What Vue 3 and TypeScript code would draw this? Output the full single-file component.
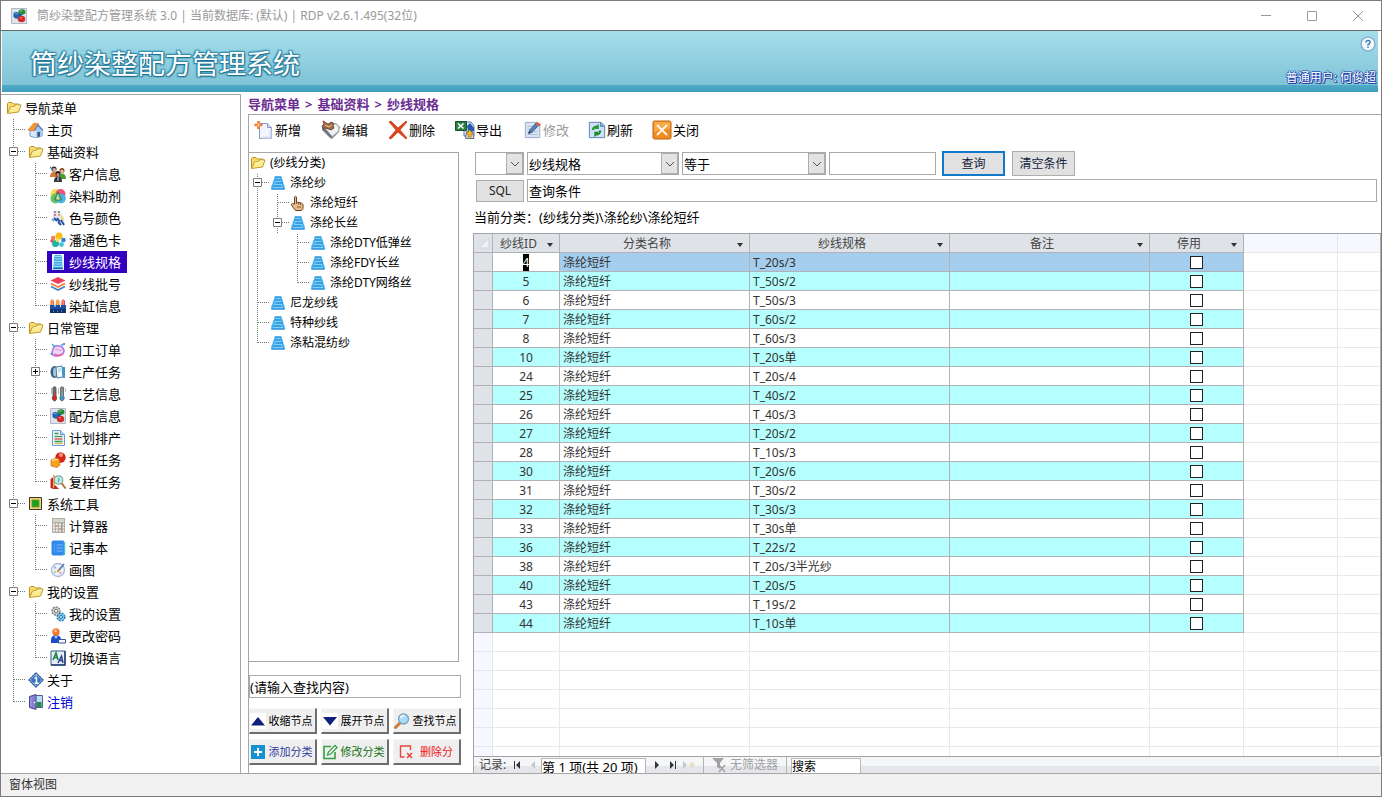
<script setup lang="ts">
import { ref } from 'vue'

type Guide = 'blank' | 'line' | 'tee' | 'end' | 'minus' | 'plus'

interface TreeRow {
  label: string
  icon: string
  guides: Guide[]
  active?: boolean
  link?: boolean
}

const icons: Record<string, string> = {
  folder:
    '<path d="M1.5 13.5V3.5l1-1h3.5l1.5 1.500h5.5v2" fill="#f7dc6a" stroke="#b8902a"/><path d="M1.5 13.5L4.5 7l4-.5 1-1.500h5.5l-2.500 7z" fill="#fdec8d" stroke="#c39a2e" stroke-linejoin="round"/><path d="M5 8l4-.5 1-1.500h3.500" stroke="#fffbd0" fill="none"/>',
  home:
    '<path d="M2 8v6l6 2 6-2V8L9 3z" fill="#dce9f8" stroke="#7e9ccb"/><path d="M8 8l3-4 4 4v6l-7 2z" fill="#a9c6ec"/><path d="M0 8L6 1l5 1-5 7z" fill="#f79531" stroke="#d9691a" stroke-width=".6"/><path d="M10 2l5.500 6-1 .8L10 4 7 9 6 8z" fill="#4f7fc4"/><path d="M9.500 10h2.500v4.500l-2.500.8z" fill="#34538f"/>',
  people:
    '<circle cx="4" cy="3" r="2.600" fill="#3c2a22"/><circle cx="4.300" cy="3.800" r="1.700" fill="#e8b088"/><path d="M0 11c0-4 2-5 4-5s4 1 4 5z" fill="#d8763c"/><path d="M0 1l3 3" stroke="#3a8ad0" stroke-width="1.500"/><circle cx="12" cy="4.500" r="2.500" fill="#8a4a28"/><circle cx="12" cy="5.300" r="1.600" fill="#f0c09a"/><path d="M8.500 13c0-4 1.500-5.500 3.500-5.500s4 1.500 4 5.500z" fill="#4c9b32"/><circle cx="8" cy="7.500" r="2.500" fill="#221d1c"/><circle cx="8" cy="8.500" r="1.600" fill="#c98f70"/><path d="M4 16c0-4 1.500-5.500 4-5.500s4 1.500 4 5.500z" fill="#30343c"/><path d="M8 11v4" stroke="#ddd"/>',
  dye:
    '<circle cx="5.500" cy="6" r="5" fill="#f4de4e"/><circle cx="10.500" cy="6" r="5" fill="#ec5577"/><circle cx="5.500" cy="10.500" r="5" fill="#63c46a"/><circle cx="11" cy="10.500" r="4.800" fill="#45b4e8"/><path d="M8 4l-3.500 8h7z" fill="#8fc873" stroke="#416f43"/><path d="M8 7l-1 4h2.500" fill="none" stroke="#e8f4da" stroke-width=".8"/>',
  palette:
    '<path d="M3 1h7l4 7 1 7-5-1-7-6z" fill="#e3e6ef"/><g stroke-width="2"><path d="M4 2h2" stroke="#a287c0"/><path d="M8 2h2" stroke="#6b9f64"/><path d="M4 5h2" stroke="#d87894"/><path d="M8 5h2" stroke="#e7a15c"/><path d="M11 6l2 4" stroke="#eedb62"/></g><path d="M4 8l3 3M7 8l3 4M11 10l3 5M8 12l3 3" stroke="#234b9e" stroke-width="1.800"/><path d="M2 9l2 2" stroke="#62a8dc" stroke-width="2"/>',
  pantone:
    '<circle cx="9" cy="4" r="3.600" fill="#f8bd16"/><circle cx="3.200" cy="6" r="2.200" fill="#f27f4c"/><circle cx="2" cy="9" r="1.800" fill="#ee4f69"/><circle cx="13.500" cy="8" r="2.300" fill="#367ed1"/><circle cx="5.500" cy="11.500" r="3.500" fill="#20b59c"/><circle cx="11.500" cy="12.500" r="2.400" fill="#48c3dc"/><circle cx="7.500" cy="8" r="2" fill="#f8df58"/>',
  spool:
    '<path d="M2 0h12v16H2z" fill="#e8f5fb"/><path d="M5 1h6l1 3 .5 10.500h-9L4 4z" fill="#3fa7e4"/><path d="M5 2.500h6M4.500 5h7M4 7.500h8M4 10h8M4 12.500h8" stroke="#9fdcf8"/><path d="M3 14.500h10" stroke="#176fae" stroke-width="1.500"/>',
  cone:
    '<path d="M4.500 1.500h7L12.500 5l.5 1 .5 3 1 1.500.500 4H1L1.500 10.500 2.500 9 3 6 4 5z" fill="#42b0f0"/><path d="M5.500 3.500h5M4.500 6.500h7M4 9.500h8M3 12.500h10" stroke="#7dcffa" stroke-width="1.500"/><path d="M5 2h6M4 5h7M6 8h7M3 11h8M1.500 14h13" stroke="#2386cf"/>',
  layers:
    '<path d="M8 1l7.500 3.500L8 8 .5 4.500z" fill="#ec3f5d"/><path d="M1 7.500L8 11l7-3.500" fill="none" stroke="#f17a38" stroke-width="1.600"/><path d="M1 10.500L8 14l7-3.500" fill="none" stroke="#3d83cc" stroke-width="1.600"/>',
  vat:
    '<path d="M.5 8V3q1.500-3.500 3.500 0v5z" fill="#f26a3c"/><path d="M6 8V3q1.500-3.500 3.500 0v5z" fill="#f7923c"/><path d="M11.500 8V3q1.500-3.500 3.500 0v5z" fill="#e2405c"/><path d="M2.200 2v6M7.700 2v6M13.200 2v6" stroke="#fbb86a"/><path d="M0 7h16v8H0z" fill="#1b4fa3"/><path d="M0 11h16v4H0z" fill="#123070"/><path d="M3 13h1M7 13h1M11 13h1" stroke="#73d0f3"/><path d="M5 4v5M10.500 4v5" stroke="#e4ecf8"/>',
  order:
    '<path d="M3 7q1-4 6-3t5 5-7 5-4-7z" fill="#ead9fa" stroke="#a57be0" stroke-width="1.500"/><path d="M4 12q4 3 9 0" stroke="#eb64a8" stroke-width="2" fill="none"/><path d="M2 2l3 3M11 2l2 2" stroke="#3ea2e0" stroke-width="1.300"/><path d="M5 8q2-2 4 0t3-1" stroke="#f08bbe" fill="none"/><circle cx="1.500" cy="12" r="1" fill="#3b8ee2"/><circle cx="14" cy="2" r="1" fill="#385dd7"/>',
  task:
    '<ellipse cx="4.500" cy="8" rx="4" ry="6" fill="#3d5c7c"/><ellipse cx="5" cy="8" rx="2" ry="4.500" fill="#a3c7dd"/><path d="M6 3l6-1 1 11-6 1z" fill="#f4fafe" stroke="#4d7fa5"/><path d="M12 3h3v11h-2z" fill="#3f98ca"/><path d="M8 5h3M8 7h3" stroke="#9fc3d8"/>',
  thermo:
    '<path d="M3 1.500q1.500-1.500 3 0V10q1.500 2 0 4t-3 0 0-4z" fill="#7d7270" stroke="#4a4040" stroke-width=".8"/><path d="M4.500 6v6" stroke="#c9423a"/><circle cx="4.500" cy="12" r="2" fill="#da2318"/><path d="M1 3h1M1 5h1M1 7h1" stroke="#777"/><path d="M10.500 1.500q1.500-1.500 3 0V10q1.500 2 0 4t-3 0 0-4z" fill="#8b8f92" stroke="#555" stroke-width=".8"/><path d="M12 6v6" stroke="#5bb0d6"/><circle cx="12" cy="12" r="1.800" fill="#269bd0"/><path d="M8 3h1M8 5h1M8 7h1M15 3h1M15 5h1" stroke="#777"/>',
  formula:
    '<path d="M.5.5h15v15H.5z" fill="#dfe3ea" stroke="#b4bac4"/><path d="M2.500 5q3-2 6 0l1 3-2 2.500q-3 1-5-1.500z" fill="#1f64b4"/><ellipse cx="11" cy="4" rx="3.500" ry="2.800" fill="#278b3b"/><ellipse cx="10.500" cy="11" rx="3.700" ry="3.200" fill="#d02c2c"/><ellipse cx="10" cy="3" rx="1.300" ry=".8" fill="#6fc274"/><path d="M4 5.500l3 .5" stroke="#6ba9e2"/><ellipse cx="10" cy="9.800" rx="1.300" ry=".8" fill="#f07c74"/><path d="M8 7.500l3-1" stroke="#184a88" stroke-width="1.500"/>',
  plan:
    '<path d="M2.500.5h8l4 4v11h-12z" fill="#eaf3fd" stroke="#6e9bd3"/><path d="M10.500.5v4h4" fill="#b9d4f1" stroke="#6e9bd3"/><path d="M4.500 6.500h8" stroke="#3f9b46" stroke-width="1.300"/><path d="M4.500 9h8" stroke="#d54a33" stroke-width="1.300"/><path d="M4.500 11.500h8M4.500 3.500h4" stroke="#3f9b46" stroke-width="1.300"/><path d="M4.500 13.500h8" stroke="#e5b432"/>',
  sample:
    '<circle cx="10.500" cy="5.500" r="5.200" fill="#dc2416"/><circle cx="11" cy="3" r="2" fill="#f99b85"/><path d="M1 8q4-3 8-1l1 6-3 2.500-6-1.500z" fill="#f6a21d" stroke="#cc6f0c" stroke-width=".7"/><path d="M2 8.500q4-2 6-.5" stroke="#ffe08c" fill="none" stroke-width="1.300"/>',
  review:
    '<path d="M.5 5l3-2v12l-3-1z" fill="#c92a28"/><path d="M3 1h2v14H3z" fill="#f2ac48"/><path d="M5 11l4 4H3z" fill="#b0302c"/><circle cx="8.500" cy="6" r="4.200" fill="#c9ecf2" stroke="#7fa9ad" stroke-width="1.300"/><path d="M8 4q2 1 0 4" stroke="#66b777" fill="none" stroke-width="1.500"/><path d="M11.500 9l4 5.500" stroke="#b6733a" stroke-width="2"/>',
  chip:
    '<path d="M1.500 1.500h12v12h-12z" fill="#f1d27a" stroke="#3b3724"/><path d="M4 4h7v7H4z" fill="#17a51e" stroke="#7a8a2a" stroke-width=".8"/>',
  calc:
    '<path d="M2 0h13v15H2z" fill="#b5aea5"/><path d="M3 1h11v3H3z" fill="#d2d5cb"/><path d="M3 6.500h11M3 9.500h11M3 12.500h11" stroke="#eee" stroke-width="1.800" stroke-dasharray="2 1"/><path d="M6 8h2M9 11h2" stroke="#c87e66"/><path d="M12 5v9" stroke="#8b8783"/>',
  notebook:
    '<rect x="1.500" y=".5" width="13" height="15" rx="2" fill="#3189ec"/><path d="M14.500 2v13" stroke="#43c6c5" stroke-width="1.500"/><path d="M4 5h1M4 8h1M4 11h1M6.500 5h6M6.500 8h6M6.500 11h6" stroke="#80bafa" stroke-width="1.200"/>',
  paint:
    '<circle cx="8" cy="8" r="6.500" fill="#edf3fb" stroke="#a4b9dc" stroke-width="1.300"/><circle cx="5" cy="5.500" r="1.200" fill="#92b8e8"/><circle cx="5" cy="10" r="1.200" fill="#a6d89f"/><circle cx="10.500" cy="11" r="1.200" fill="#e7a3bc"/><path d="M14 2L9 8" stroke="#5b74a8" stroke-width="1.800"/><path d="M9 7.500L7.500 10" stroke="#e88928" stroke-width="2"/>',
  gears:
    '<circle cx="6" cy="5" r="4" fill="#cfd0d0" stroke="#848688" stroke-width="1.600" stroke-dasharray="2 1"/><circle cx="6" cy="5" r="1.600" fill="#fff" stroke="#777"/><circle cx="11" cy="11" r="3.800" fill="#89cff2" stroke="#2a83b7" stroke-width="1.600" stroke-dasharray="2 1"/><circle cx="11" cy="11" r="1.500" fill="#fff" stroke="#176ea5"/>',
  user:
    '<path d="M1 15V11q1-4 5-4t5 4v4z" fill="#1e4dcc"/><path d="M4 8l2 3 2-3" fill="#a4c4ff"/><circle cx="6" cy="4" r="3.700" fill="#f5772a"/><circle cx="5.500" cy="2.800" r="1.500" fill="#fdb987"/><path d="M8.500 11.500h7v3.500h-7z" fill="#f3f6ff" stroke="#3d588f"/>',
  language:
    '<path d="M1 1h14v14H1z" fill="#e5eef9" stroke="#385c8c"/><path d="M1 15h14V1" fill="none" stroke="#203f70" stroke-width="1.500"/><path d="M3 10l3-7 2 7M4 7.500h3.500" stroke="#228340" fill="none" stroke-width="1.600"/><path d="M8 13l3.500-7 1.500 7M9 10.500h4" stroke="#20408b" fill="none" stroke-width="1.400"/>',
  about:
    '<path d="M8 .5L15.500 8 8 15.500.5 8z" fill="#2a61ad" stroke="#173e76" stroke-dasharray="1.500 1"/><path d="M8 2L14 8l-6 6-6-6z" fill="#3a75c2" stroke="#c9dcf2" stroke-width=".6"/><path d="M6.500 6H8.500v5M6.500 11.200h4" stroke="#fff" stroke-width="1.500" fill="none"/><path d="M7.500 4h1.500" stroke="#fff"/>',
  logout:
    '<path d="M6 1.500h8.500v12H6z" fill="#b7dff4" stroke="#52618e"/><path d="M8.500 8h5v5h-5z" fill="#228c48"/><path d="M1.500 2.500L8 .5v15l-6.500-2z" fill="#8580cb" stroke="#4b4691"/><path d="M3 3.500v9" stroke="#aaa5e5"/><circle cx="6.500" cy="8.500" r=".8" fill="#fff"/>',
  hand:
    '<path d="M4.500 9V2q1-1.500 2 0v5l5 1 1.500 1.500v4L11.500 15.500h-6L2 11q-1.500-2 .5-2.500z" fill="#e8b98b" stroke="#6c4328"/><path d="M6.500 7v2M8.500 7.500v2M10.500 8v2" stroke="#8b5938"/><path d="M7 12h4" stroke="#c18a5d" stroke-width="2"/>',
  add:
    '<path d="M5.500 3.500h8l4 4v11h-12z" fill="#f3f5fd" stroke="#8f96c3"/><path d="M13.500 3.500v4h4" fill="#d4d8f0" stroke="#8f96c3"/><path d="M16.500 9v8.500h-8" fill="none" stroke="#d9ddf3" stroke-width="2"/><path d="M4.500 1v8M.5 5h8" stroke="#ee762b" stroke-width="2.600"/><path d="M4.500 3v4M2.500 5h4" stroke="#ffc48a"/>',
  edit:
    '<path d="M8 4l7-1 4 4-1 5-7 7-2-1L1 10V8z" fill="#8b8f94"/><path d="M5 9l6-5h4l3 3.500-1 4-6 5z" fill="#f1f2f3" stroke="#b3b6ba" stroke-width=".7"/><path d="M1 9l9 9 1-1.500L4 9z" fill="#6f7378"/><path d="M2 1l5 3 4-2 2 2-1 2 1 2-3 2-5-2-3 .5L1 6l2-2z" fill="#9c6a48" stroke="#5b3a28" stroke-width=".8"/><path d="M4 5l4 2 3-2" stroke="#dba67c" stroke-width="1.500" fill="none"/><path d="M2 1l3 3" stroke="#cf5536" stroke-width="1.500"/>',
  remove:
    '<path d="M1 2l2-1 7 7 8-7 1 1-7 8 7 8-1 1-8-7-7 7-2-1 7-8z" fill="#e4441b" stroke="#b62c0b" stroke-width=".6"/>',
  export:
    '<path d="M9 2h7l3 4v10H9z" fill="#e6eefc" stroke="#4777bd"/><path d="M.5 1.500h11v9H.5z" fill="#2a7f3d" stroke="#17532a"/><path d="M3 3.500l5.500 5M8.500 3.500L3 8.500" stroke="#fff" stroke-width="1.600"/><path d="M12 6l3-3 4 5v3h-6z" fill="#2758af"/><path d="M10.500 18.500l1-7h6l1.500 7z" fill="#d9dbe0" stroke="#67707e"/><path d="M14.700 10l3.500 4h-2v3h-3v-3h-2z" fill="#f7b62e" stroke="#ae7413" stroke-width=".7"/>',
  modify:
    '<path d="M1.500 1.500h13l3 3v14h-16z" fill="#d8e3f4" stroke="#93a6c5"/><path d="M4 6h8M4 9h6M4 12h11M4 15h11" stroke="#a8bad8"/><path d="M5 14l1.500-4 7-8 3 2.500-7.500 8z" fill="#4d83bc" stroke="#385e8c"/><path d="M13 3l2-2 4 3-2 2.500z" fill="#e85d42"/><path d="M5 14l1-2.500 1.500 1z" fill="#222"/>',
  refresh:
    '<path d="M1.500 1.500h13l4 4v13h-17z" fill="#cfe2fa" stroke="#527cae"/><path d="M14 1.500v4.500h4.500" fill="#86acd9" stroke="#527cae"/><path d="M4 10q1-5 6-5l2-2v6H7l1.500-1.500Q6.500 7.500 7 10z" fill="#259536"/><path d="M15 10.500q-1 5.500-6 5.500l-2 2v-6h5l-1.500 1.500q2 0 1.500-3z" fill="#1c8b2d"/>',
  close:
    '<rect x="1" y="1" width="18" height="18" rx="1.500" fill="#ef8d20" stroke="#bd6514"/><path d="M2 2h16v7q-8-1-16 3z" fill="#f7aa47"/><path d="M5.500 5.500l9 9M14.500 5.500l-9 9" stroke="#fff7e9" stroke-width="1.800" stroke-linecap="round"/>',
  up: '<path d="M0 0h16v16H0z" fill="#fff"/><path d="M8 4l7 8.500H1z" fill="#0f1f7a"/>',
  down: '<path d="M0 0h16v16H0z" fill="#fff"/><path d="M8 12.500L1 4h14z" fill="#0f1f7a"/>',
  find:
    '<path d="M6.500 9.500L1.500 14.500" stroke="#d47b33" stroke-width="3" stroke-linecap="round"/><circle cx="9.500" cy="6" r="5" fill="#a8dcf8" stroke="#7d9fb8" stroke-width="1.300"/><path d="M6.500 5q1-3 4-2.500" stroke="#fff" fill="none" stroke-width="1.500"/>',
  plusBox: '<path d="M1 1h14v14H1z" fill="#1691d0"/><path d="M8 4v8M4 8h8" stroke="#fff" stroke-width="2"/>',
  editBox:
    '<path d="M9 2.500H2v12h11V8" fill="none" stroke="#35a045" stroke-width="1.600"/><path d="M5.500 11l1-3L13 1.500l2 2L8.500 10z" fill="#fff" stroke="#35a045" stroke-width="1.300"/>',
  deleteBox:
    '<path d="M12.500 6V2h-10v11h4" fill="none" stroke="#e8483d" stroke-width="1.400"/><path d="M9 9l5 5M14 9l-5 5" stroke="#e8483d" stroke-width="1.600"/>',
}

const crumbs = ['导航菜单', '>', '基础资料', '>', '纱线规格']

const nav: TreeRow[] = [
  { label: '导航菜单', icon: 'folder', guides: [] },
  { label: '主页', icon: 'home', guides: ['tee'] },
  { label: '基础资料', icon: 'folder', guides: ['minus'] },
  { label: '客户信息', icon: 'people', guides: ['line', 'tee'] },
  { label: '染料助剂', icon: 'dye', guides: ['line', 'tee'] },
  { label: '色号颜色', icon: 'palette', guides: ['line', 'tee'] },
  { label: '潘通色卡', icon: 'pantone', guides: ['line', 'tee'] },
  { label: '纱线规格', icon: 'spool', guides: ['line', 'tee'], active: true },
  { label: '纱线批号', icon: 'layers', guides: ['line', 'tee'] },
  { label: '染缸信息', icon: 'vat', guides: ['line', 'end'] },
  { label: '日常管理', icon: 'folder', guides: ['minus'] },
  { label: '加工订单', icon: 'order', guides: ['line', 'tee'] },
  { label: '生产任务', icon: 'task', guides: ['line', 'plus'] },
  { label: '工艺信息', icon: 'thermo', guides: ['line', 'tee'] },
  { label: '配方信息', icon: 'formula', guides: ['line', 'tee'] },
  { label: '计划排产', icon: 'plan', guides: ['line', 'tee'] },
  { label: '打样任务', icon: 'sample', guides: ['line', 'tee'] },
  { label: '复样任务', icon: 'review', guides: ['line', 'end'] },
  { label: '系统工具', icon: 'chip', guides: ['minus'] },
  { label: '计算器', icon: 'calc', guides: ['line', 'tee'] },
  { label: '记事本', icon: 'notebook', guides: ['line', 'tee'] },
  { label: '画图', icon: 'paint', guides: ['line', 'end'] },
  { label: '我的设置', icon: 'folder', guides: ['minus'] },
  { label: '我的设置', icon: 'gears', guides: ['line', 'tee'] },
  { label: '更改密码', icon: 'user', guides: ['line', 'tee'] },
  { label: '切换语言', icon: 'language', guides: ['line', 'end'] },
  { label: '关于', icon: 'about', guides: ['tee'] },
  { label: '注销', icon: 'logout', guides: ['end'], link: true },
]

const categories: TreeRow[] = [
  { label: '(纱线分类)', icon: 'folder', guides: [] },
  { label: '涤纶纱', icon: 'cone', guides: ['minus'] },
  { label: '涤纶短纤', icon: 'hand', guides: ['line', 'tee'] },
  { label: '涤纶长丝', icon: 'cone', guides: ['line', 'minus'] },
  { label: '涤纶DTY低弹丝', icon: 'cone', guides: ['line', 'blank', 'tee'] },
  { label: '涤纶FDY长丝', icon: 'cone', guides: ['line', 'blank', 'tee'] },
  { label: '涤纶DTY网络丝', icon: 'cone', guides: ['line', 'blank', 'end'] },
  { label: '尼龙纱线', icon: 'cone', guides: ['tee'] },
  { label: '特种纱线', icon: 'cone', guides: ['tee'] },
  { label: '涤粘混纺纱', icon: 'cone', guides: ['end'] },
]

const guidePaths: Record<Guide, string> = {
  blank: '',
  line: 'M10.5 0V22',
  tee: 'M10.5 0V22M11 10.5H22',
  end: 'M10.5 0V11M11 10.5H22',
  minus: 'M10.5 0V22M11 10.5H22',
  plus: 'M10.5 0V22M11 10.5H22',
}

const mainTools = [
  { label: '新增', icon: 'add' },
  { label: '编辑', icon: 'edit' },
  { label: '删除', icon: 'remove' },
  { label: '导出', icon: 'export' },
]
const sideTools = [
  { label: '修改', icon: 'modify', disabled: true },
  { label: '刷新', icon: 'refresh', disabled: false },
  { label: '关闭', icon: 'close', disabled: false },
]

const nodeButtons = [
  { label: '收缩节点', icon: 'up', tone: '' },
  { label: '展开节点', icon: 'down', tone: '' },
  { label: '查找节点', icon: 'find', tone: '' },
  { label: '添加分类', icon: 'plusBox', tone: 'blue' },
  { label: '修改分类', icon: 'editBox', tone: 'green' },
  { label: '删除分', icon: 'deleteBox', tone: 'red' },
]

const columns = ['纱线ID', '分类名称', '纱线规格', '备注', '停用']

const specs: [number, string][] = [
  [4, 'T_20s/3'], [5, 'T_50s/2'], [6, 'T_50s/3'], [7, 'T_60s/2'], [8, 'T_60s/3'],
  [10, 'T_20s单'], [24, 'T_20s/4'], [25, 'T_40s/2'], [26, 'T_40s/3'], [27, 'T_20s/2'],
  [28, 'T_10s/3'], [30, 'T_20s/6'], [31, 'T_30s/2'], [32, 'T_30s/3'], [33, 'T_30s单'],
  [36, 'T_22s/2'], [38, 'T_20s/3半光纱'], [40, 'T_20s/5'], [43, 'T_19s/2'], [44, 'T_10s单'],
]
const rows = ref(specs.map(([id, spec]) => ({ id, category: '涤纶短纤', spec, note: '', disabled: false })))

const logic = ref('')
const field = ref('纱线规格')
const operator = ref('等于')
const keyword = ref('')
const condition = ref('查询条件')
const nodeSearch = ref('(请输入查找内容)')
const position = ref('第 1 项(共 20 项)')
const recordSearch = ref('搜索')
</script>

<template>
  <div class="window">
    <header class="titlebar">
      <svg class="i16" viewBox="0 0 16 16" v-html="icons.formula"></svg>
      <span class="caption">筒纱染整配方管理系统 3.0 | 当前数据库: (默认) | RDP v2.6.1.495(32位)</span>
      <div class="controls">
        <button type="button" aria-label="最小化"><svg viewBox="0 0 12 12"><path d="M1 5.500h10" /></svg></button>
        <button type="button" aria-label="最大化"><svg viewBox="0 0 12 12"><path d="M1.500 1.500h9v9h-9z" /></svg></button>
        <button type="button" aria-label="关闭"><svg viewBox="0 0 12 12"><path d="M1 1l10 10M11 1L1 11" /></svg></button>
      </div>
    </header>

    <div class="banner">
      <h1>筒纱染整配方管理系统</h1>
      <div class="account">
        <button type="button" class="help" aria-label="帮助">
          <svg viewBox="0 0 16 16">
            <circle cx="8" cy="8" r="7" fill="#eef6fc" stroke="#7aa3c4" stroke-width="1.200" />
            <path d="M6 6.500q0-2 2-2t2 1.700-2 2.300v1M8 10.500v1.500" fill="none" stroke="#4a7fae" stroke-width="1.500" />
          </svg>
        </button>
        <span class="who">普通用户: 何俊超</span>
      </div>
    </div>

    <div class="body">
      <nav class="sidebar">
        <ul class="tree">
          <li v-for="(row, i) in nav" :key="i">
            <svg v-for="(g, k) in row.guides" :key="k" class="guide" viewBox="0 0 22 22">
              <path class="dots" :d="guidePaths[g]" />
              <template v-if="g === 'minus' || g === 'plus'">
                <path class="box" d="M6.500 6.500h8v8h-8z" />
                <path class="sign" :d="g === 'plus' ? 'M8 10.500h5M10.500 8v5' : 'M8 10.500h5'" />
              </template>
            </svg>
            <a href="#" class="node" :class="{ active: row.active, link: row.link }">
              <svg class="i16" viewBox="0 0 16 16" v-html="icons[row.icon]"></svg>{{ row.label }}
            </a>
          </li>
        </ul>
      </nav>

      <main class="main">
        <h2 class="crumbs"><span v-for="(c, i) in crumbs" :key="i">{{ c }}</span></h2>
        <section class="workspace">
          <div class="left">
            <div class="toolbar">
              <button v-for="t in mainTools" :key="t.label" type="button">
                <svg class="i20" viewBox="0 0 20 20" v-html="icons[t.icon]"></svg>{{ t.label }}
              </button>
              <div class="tools-more">
                <button v-for="t in sideTools" :key="t.label" type="button" :disabled="t.disabled">
                  <svg :class="t.icon === 'close' ? 'i20' : 'i18'" viewBox="0 0 20 20" v-html="icons[t.icon]"></svg>{{ t.label }}
                </button>
              </div>
            </div>
            <div class="category-box">
              <ul class="tree small">
                <li v-for="(row, i) in categories" :key="i">
                  <svg v-for="(g, k) in row.guides" :key="k" class="guide" viewBox="2 1 20 20">
                    <path class="dots" :d="guidePaths[g]" />
                    <template v-if="g === 'minus'">
                      <path class="box" d="M6.500 6.500h8v8h-8z" />
                      <path class="sign" d="M8 10.500h5" />
                    </template>
                  </svg>
                  <a href="#" class="node">
                    <svg class="i16" viewBox="0 0 16 16" v-html="icons[row.icon]"></svg>{{ row.label }}
                  </a>
                </li>
              </ul>
            </div>
            <input v-model="nodeSearch" class="field node-search" type="text" aria-label="查找内容" />
            <div class="node-buttons">
              <button v-for="b in nodeButtons" :key="b.label" type="button" :class="b.tone">
                <svg class="i16" viewBox="0 0 16 16" v-html="icons[b.icon]"></svg><span>{{ b.label }}</span>
              </button>
            </div>
          </div>

          <div class="right">
            <form class="query" @submit.prevent>
              <div class="line">
                <div class="combo logic">
                  <select v-model="logic" aria-label="逻辑"><option value=""></option><option>并且</option></select>
                  <span class="drop"><svg viewBox="0 0 10 6"><path d="M1 1l4 4 4-4" /></svg></span>
                </div>
                <div class="combo column">
                  <select v-model="field" aria-label="字段"><option>纱线规格</option></select>
                  <span class="drop"><svg viewBox="0 0 10 6"><path d="M1 1l4 4 4-4" /></svg></span>
                </div>
                <div class="combo operator">
                  <select v-model="operator" aria-label="运算符"><option>等于</option></select>
                  <span class="drop"><svg viewBox="0 0 10 6"><path d="M1 1l4 4 4-4" /></svg></span>
                </div>
                <input v-model="keyword" class="field keyword" type="text" aria-label="查询值" />
                <button type="submit" class="push primary">查询</button>
                <button type="button" class="push">清空条件</button>
              </div>
              <div class="line second">
                <button type="button" class="push sql">SQL</button>
                <input v-model="condition" class="field condition" type="text" aria-label="查询条件" />
              </div>
            </form>
            <p class="current-path">当前分类：(纱线分类)\涤纶纱\涤纶短纤</p>
            <div class="grid">
              <div class="sheet">
                <table>
                  <colgroup>
                    <col class="c-mark" /><col class="c-id" /><col class="c-cat" /><col class="c-spec" />
                    <col class="c-note" /><col class="c-off" /><col class="c-off" /><col />
                  </colgroup>
                  <thead>
                    <tr>
                      <th class="corner"><svg viewBox="0 0 12 12"><path d="M11 1v10H1z" /></svg></th>
                      <th v-for="c in columns" :key="c">
                        <div class="head">
                          <span>{{ c }}</span><svg viewBox="0 0 6 4"><path d="M0 0h6L3 4z" /></svg>
                        </div>
                      </th>
                      <th class="void"></th>
                      <th class="void last"></th>
                    </tr>
                  </thead>
                  <tbody>
                    <tr v-for="(r, i) in rows" :key="r.id" class="data" :class="{ alt: i % 2 === 1, current: i === 0 }">
                      <td class="mark"></td>
                      <td class="id"><span>{{ r.id }}</span></td>
                      <td>{{ r.category }}</td>
                      <td>{{ r.spec }}</td>
                      <td>{{ r.note }}</td>
                      <td class="check"><input v-model="r.disabled" type="checkbox" :aria-label="`停用 ${r.id}`" /></td>
                      <td class="void"></td>
                      <td class="void last"></td>
                    </tr>
                    <tr v-for="n in 30" :key="'e' + n" class="empty">
                      <td class="mark"></td>
                      <td v-for="k in 6" :key="k"></td>
                      <td class="last"></td>
                    </tr>
                  </tbody>
                </table>
              </div>
              <div class="records">
                <span class="label">记录:</span>
                <button type="button" aria-label="第一条"><svg viewBox="0 0 8 8"><path d="M1 0h1v8H1zM7 0v8L3 4z" /></svg></button>
                <button type="button" aria-label="上一条" disabled><svg viewBox="0 0 8 8"><path d="M6 0v8L2 4z" /></svg></button>
                <input v-model="position" class="position" type="text" aria-label="当前记录" />
                <button type="button" aria-label="下一条"><svg viewBox="0 0 8 8"><path d="M2 0v8l4-4z" /></svg></button>
                <button type="button" aria-label="最后一条"><svg viewBox="0 0 8 8"><path d="M1 0v8l4-4zM6 0h1v8H6z" /></svg></button>
                <button type="button" aria-label="新记录" disabled><svg class="wide" viewBox="0 0 12 8"><path d="M0 0v8l4-4z" /><path d="M9 1v6M6 4h6M7 2l4 4M11 2L7 6" stroke="#ead9b8" fill="none" /></svg></button>
                <span class="filter">
                  <svg viewBox="0 0 15 15"><path d="M0 0h12L8 5v6l-3-2V5z" fill="#a2a2a2" /><path d="M7 7l6 7M13 7l-6 7" stroke="#a2a2a2" stroke-width="1.500" /></svg>无筛选器
                </span>
                <input v-model="recordSearch" class="search" type="text" aria-label="搜索" />
              </div>
            </div>
          </div>
        </section>
      </main>
    </div>

    <footer class="status">窗体视图</footer>
  </div>
</template>

<style>
body {
  margin: 0;
}
</style>

<style scoped>
.window,
.window * {
  box-sizing: border-box;
}
.window {
  display: flex;
  flex-direction: column;
  height: 100vh;
  border: 1px solid #7b7b7b;
  background: #fff;
  color: #000;
  font: 13px/20px "Noto Sans", "Noto Sans CJK SC", sans-serif;
  overflow: hidden;
}
button,
input,
select {
  margin: 0;
  font: inherit;
  color: inherit;
}
svg {
  display: block;
  flex: none;
}
.i16 {
  width: 16px;
  height: 16px;
}
.i18 {
  width: 18px;
  height: 20px;
}
.i20 {
  width: 20px;
  height: 20px;
}

.titlebar {
  display: flex;
  align-items: center;
  flex: none;
  height: 30px;
  padding-left: 10px;
  gap: 10px;
  border-bottom: 1px solid #686868;
  color: #999;
  font-size: 12px;
}
.controls {
  display: flex;
  margin-left: auto;
}
.controls button {
  display: grid;
  place-items: center;
  width: 46px;
  height: 28px;
  padding: 0;
  border: 0;
  background: none;
}
.controls svg {
  width: 12px;
  height: 12px;
  fill: none;
  stroke: #999;
}

.banner {
  display: flex;
  justify-content: space-between;
  flex: none;
  height: 61px;
  margin: 0 3px 0 1px;
  padding: 0 2px 7px 28px;
  background: linear-gradient(#a5deeb, #7fc3d7 54px, #4faac7 54px, #3f9dbc);
}
.banner h1 {
  align-self: center;
  margin: 12px 0 0;
  color: #fff;
  font-size: 27px;
  line-height: 36px;
  font-weight: 400;
  text-shadow: 1px 1px 1px #1f6f8e, -1px -1px 1px #3590ae, 1px -1px 1px #3590ae, -1px 1px 1px #2a7e9d, 0 0 3px #2b87a6;
}
.account {
  display: flex;
  flex-direction: column;
  justify-content: space-between;
  align-items: flex-end;
  padding-top: 5px;
}
.help {
  padding: 0;
  border: 0;
  background: none;
}
.help svg {
  width: 16px;
  height: 16px;
}
.who {
  margin-bottom: -2px;
  color: #fff;
  font-size: 12px;
  line-height: 18px;
  text-shadow: 1px 0 #2344a8, -1px 0 #3c68c0, 0 1px #2344a8, 0 -1px #3c68c0, 1px 1px #1c2f88;
}

.body {
  display: flex;
  flex: 1;
  min-height: 0;
}
.sidebar {
  flex: none;
  width: 240px;
  margin-top: 2px;
  padding: 2px 0 0 2px;
  border: solid #a6a6a6;
  border-width: 1px 1px 0 0;
}
.tree {
  margin: 0;
  padding: 0;
  list-style: none;
}
.tree li {
  display: flex;
  height: 22px;
}
.guide {
  width: 22px;
  height: 22px;
}
.dots {
  fill: none;
  stroke: #708078;
  stroke-dasharray: 1 1;
}
.box {
  fill: #fff;
  stroke: #7c7c7c;
}
.sign {
  fill: none;
  stroke: #000;
}
.node {
  display: flex;
  align-items: center;
  gap: 3px;
  padding: 0 6px 0 3px;
  color: #000;
  text-decoration: none;
  white-space: nowrap;
}
.node.active {
  background: #3300c0;
  color: #fff;
}
.node.link {
  color: #0000d8;
}
.tree.small {
  font-size: 12px;
}
.tree.small li {
  height: 20px;
}
.tree.small .guide {
  width: 20px;
  height: 20px;
}
.tree.small .node {
  gap: 4px;
  padding: 0 2px 0 1px;
}

.main {
  display: flex;
  flex-direction: column;
  flex: 1;
  min-width: 0;
  padding: 2px 0 0 7px;
}
.crumbs {
  display: flex;
  gap: 5px;
  margin: 0;
  height: 20px;
  color: #6b2d91;
  font-size: 13px;
  line-height: 20px;
  font-weight: 700;
}
.workspace {
  display: flex;
  flex: 1;
  min-height: 0;
  border: solid #a6a6a6;
  border-width: 1px 0 0 1px;
}
.left {
  display: flex;
  flex-direction: column;
  flex: none;
  width: 224px;
  padding-bottom: 8px;
}
.toolbar {
  display: flex;
  flex: none;
  gap: 20px;
  width: 480px;
  height: 37px;
  padding: 5px 0 0 5px;
}
.toolbar button {
  display: flex;
  align-items: center;
  gap: 1px;
  height: 20px;
  padding: 0;
  border: 0;
  background: none;
  white-space: nowrap;
}
.toolbar button:disabled {
  color: #9b9b9b;
}
.tools-more {
  display: flex;
  gap: 19px;
  margin-left: 2px;
}
.category-box {
  flex: 1;
  min-height: 0;
  width: 210px;
  border: solid #a6a6a6;
  border-width: 1px 1px 1px 0;
  overflow: hidden;
}
.field {
  border: 1px solid #a9a9a9;
  background: #fff;
  padding: 0 1px;
  outline: 0;
  height: 23px;
  line-height: 20px;
}
.node-search {
  flex: none;
  width: 212px;
  margin: 13px 0 10px;
  padding: 0;
}
.node-buttons {
  display: grid;
  grid-template-columns: repeat(3, 68px);
  gap: 5px 4px;
  font-size: 11px;
}
.node-buttons button {
  display: flex;
  align-items: center;
  height: 26px;
  padding: 0;
  border: solid;
  border-width: 1px 2px 2px 1px;
  border-color: #f6f6f6 #6e6e6e #6e6e6e #f6f6f6;
  background: #efefef;
  white-space: nowrap;
}
.node-buttons span {
  flex: 1;
}
.node-buttons .blue {
  color: #2f3b9f;
}
.node-buttons .green {
  color: #157015;
}
.node-buttons .red {
  padding-left: 4px;
  color: #f01818;
}
.node-buttons .red span {
  text-align: center;
}

.right {
  display: flex;
  flex-direction: column;
  flex: 1;
  min-width: 0;
  padding-top: 36px;
}
.query {
  padding-left: 2px;
}
.line {
  display: flex;
  align-items: center;
  gap: 3px;
  height: 25px;
}
.line.second {
  height: 27px;
  padding: 2px 4px 0 1px;
}
.combo {
  position: relative;
  height: 23px;
}
.combo select {
  appearance: none;
  width: 100%;
  height: 23px;
  padding: 0 20px 0 1px;
  border: 1px solid #a9a9a9;
  border-radius: 0;
  background: #fff;
  line-height: 18px;
  outline: 0;
}
.drop {
  position: absolute;
  top: 1px;
  right: 1px;
  bottom: 1px;
  display: grid;
  place-items: center;
  width: 17px;
  border: 1px solid #adadad;
  background: #e3e3e3;
  pointer-events: none;
}
.drop svg {
  width: 10px;
  height: 6px;
  fill: none;
  stroke: #505050;
}
.logic {
  width: 49px;
}
.column {
  width: 152px;
}
.operator {
  width: 144px;
}
.keyword {
  width: 107px;
}
.push {
  width: 63px;
  height: 25px;
  padding: 0;
  border: 1px solid #adadad;
  background: #e1e1e1;
  color: #12213c;
  font-size: 12px;
  line-height: 18px;
  white-space: nowrap;
}
.push.primary {
  margin: 0 4px 0 3px;
  border: 2px solid #1279c8;
}
.push.sql {
  width: 48px;
  height: 22px;
  color: #222;
}
.condition {
  flex: 1;
  min-width: 0;
}
.current-path {
  margin: 4px 0 6px 1px;
  line-height: 20px;
}
.grid {
  display: flex;
  flex-direction: column;
  flex: 1;
  min-height: 0;
  border: solid #a0a3a8;
  border-width: 1px 0 0 1px;
}
.sheet {
  flex: 1;
  min-height: 0;
  overflow: hidden;
  border-right: 1px solid #b0b0b0;
}
table {
  width: 100%;
  table-layout: fixed;
  border-collapse: separate;
  border-spacing: 0;
  font-size: 12px;
  line-height: 17px;
  color: #333;
}
.c-mark {
  width: 19px;
}
.c-id {
  width: 67px;
}
.c-cat {
  width: 190px;
}
.c-spec,
.c-note {
  width: 200px;
}
.c-off {
  width: 94px;
}
th,
td {
  height: 19px;
  padding: 1px 3px 0;
  border: solid #b2b2b6;
  border-width: 0 1px 1px 0;
  white-space: nowrap;
  overflow: hidden;
}
th {
  padding: 0;
  background: #dfe3e8;
  color: #444;
  font-weight: 400;
}
.corner svg {
  width: 12px;
  height: 12px;
  margin-left: 4px;
  fill: #f0f2f6;
  stroke: #cdd2da;
  stroke-width: 1px;
}
.head {
  display: flex;
  align-items: center;
  height: 18px;
  padding-right: 6px;
}
.head span {
  flex: 1;
  text-align: center;
  padding-right: 3px;
}
.head svg {
  width: 6px;
  height: 4px;
  margin-top: 3px;
  fill: #333;
}
th.void {
  background: #f7f8fe;
  border-color: #e6e6ee;
}
td.void,
.empty td {
  background: #fff;
  border-color: #e9e9ec;
}
.empty .mark {
  background: #f6f7ff;
  border-color: #e6e6f0;
}
.last {
  border-right: 0;
}
.alt td {
  background: #b6ffff;
}
.current td {
  background: #a4cdee;
}
.current td.id {
  background: #fff;
}
.data td.mark {
  background: #dfe3e8;
}
.data td.void {
  background: #fff;
}
.id {
  text-align: center;
}
.current .id span {
  display: inline-block;
  vertical-align: top;
  background: #000;
  color: #fff;
}
.check {
  line-height: 0;
}
.check input {
  display: block;
  appearance: none;
  width: 13px;
  height: 13px;
  margin: 0 auto;
  border: 1px solid #222;
  background: #fff;
}
.check input:checked {
  background: #333;
}

.records {
  display: flex;
  align-items: flex-start;
  flex: none;
  height: 17px;
  margin-right: 1px;
  padding-left: 5px;
  border-top: 1px solid #a0a3a8;
  background: linear-gradient(#f4f6f8 9px, #e4e6eb 9px);
  color: #444;
  line-height: 16px;
}
.label {
  width: 30px;
  font-size: 12px;
}
.records button {
  display: grid;
  place-items: center;
  width: 16px;
  height: 16px;
  padding: 0;
  border: 0;
  background: none;
}
.records button svg {
  width: 8px;
  height: 8px;
  fill: #333;
}
.records button svg.wide {
  width: 12px;
}
.records button:disabled svg {
  fill: #c4c6ca;
}
.records input {
  height: 15px;
  margin-top: 1px;
  padding: 0;
  border: 1px solid #b8b8b8;
  border-bottom: 0;
  background: #fff;
  color: #000;
  font-size: 12px;
  line-height: 14px;
  outline: 0;
}
.records .position {
  width: 105px;
  margin-right: 3px;
  font-size: 13px;
}
.search {
  width: 70px;
}
.filter {
  display: flex;
  align-items: center;
  gap: 3px;
  height: 16px;
  margin: 0 4px 0 6px;
  padding: 0 8px;
  border: solid #b0b3b8;
  border-width: 0 1px;
  color: #a2a2a2;
  font-size: 12px;
  white-space: nowrap;
}
.filter svg {
  width: 15px;
  height: 15px;
}

.status {
  flex: none;
  height: 23px;
  padding-left: 8px;
  border-top: 1px solid #a6a6a6;
  background: #f1f1f1;
  color: #333;
  font-size: 12px;
  line-height: 22px;
}
</style>
